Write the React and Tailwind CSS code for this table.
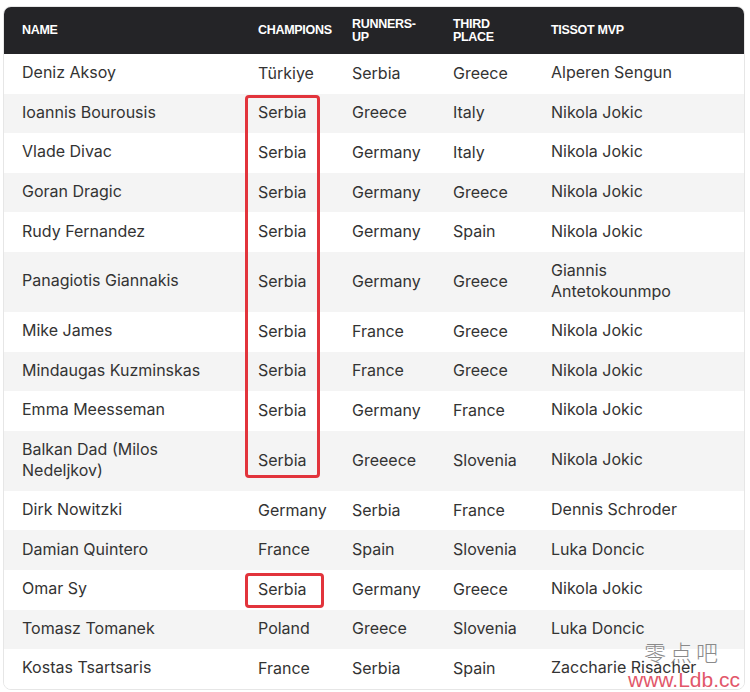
const rows = [
  { name: ["Deniz Aksoy"], champ: "Türkiye", runner: "Serbia", third: "Greece", mvp: ["Alperen Sengun"] },
  { name: ["Ioannis Bourousis"], champ: "Serbia", runner: "Greece", third: "Italy", mvp: ["Nikola Jokic"] },
  { name: ["Vlade Divac"], champ: "Serbia", runner: "Germany", third: "Italy", mvp: ["Nikola Jokic"] },
  { name: ["Goran Dragic"], champ: "Serbia", runner: "Germany", third: "Greece", mvp: ["Nikola Jokic"] },
  { name: ["Rudy Fernandez"], champ: "Serbia", runner: "Germany", third: "Spain", mvp: ["Nikola Jokic"] },
  { name: ["Panagiotis Giannakis"], champ: "Serbia", runner: "Germany", third: "Greece", mvp: ["Giannis", "Antetokounmpo"] },
  { name: ["Mike James"], champ: "Serbia", runner: "France", third: "Greece", mvp: ["Nikola Jokic"] },
  { name: ["Mindaugas Kuzminskas"], champ: "Serbia", runner: "France", third: "Greece", mvp: ["Nikola Jokic"] },
  { name: ["Emma Meesseman"], champ: "Serbia", runner: "Germany", third: "France", mvp: ["Nikola Jokic"] },
  { name: ["Balkan Dad (Milos", "Nedeljkov)"], champ: "Serbia", runner: "Greeece", third: "Slovenia", mvp: ["Nikola Jokic"] },
  { name: ["Dirk Nowitzki"], champ: "Germany", runner: "Serbia", third: "France", mvp: ["Dennis Schroder"] },
  { name: ["Damian Quintero"], champ: "France", runner: "Spain", third: "Slovenia", mvp: ["Luka Doncic"] },
  { name: ["Omar Sy"], champ: "Serbia", runner: "Germany", third: "Greece", mvp: ["Nikola Jokic"] },
  { name: ["Tomasz Tomanek"], champ: "Poland", runner: "Greece", third: "Slovenia", mvp: ["Luka Doncic"] },
  { name: ["Kostas Tsartsaris"], champ: "France", runner: "Serbia", third: "Spain", mvp: ["Zaccharie Risacher"] },
];

const cols = "grid grid-cols-[236px_94px_101px_98px_1fr]";

const Lines = ({ lines }) => (
  <div className="leading-[21px]">
    {lines.map((l, i) => (
      <div key={i} className="whitespace-nowrap">
        {l}
      </div>
    ))}
  </div>
);

export default function App() {
  return (
    <div className="w-[750px] h-[692px] bg-white relative overflow-hidden font-['Inter','Liberation_Sans',sans-serif]">
      <div className="pt-[6px] pl-[3px] pr-[5px]">
        <div className="relative rounded-lg border border-[#e6e6e6] overflow-hidden">
          <div
            className={`${cols} h-[47px] bg-[#242427] text-white font-['Liberation_Sans',sans-serif] font-bold text-[12.5px] leading-[13px] tracking-[-0.3px] items-center`}
          >
            <div className="pl-[18px]">NAME</div>
            <div className="pl-[18px]">CHAMPIONS</div>
            <div className="pl-[18px]">
              RUNNERS-
              <br />
              UP
            </div>
            <div className="pl-[18px]">
              THIRD
              <br />
              PLACE
            </div>
            <div className="pl-[18px]">TISSOT MVP</div>
          </div>
          {rows.map((r, i) => {
            const tall = r.name.length > 1 || r.mvp.length > 1;
            return (
              <div
                key={i}
                className={`${cols} items-center pb-[2px] text-[16px] text-[#333] ${
                  tall ? "h-[60px]" : "h-[39.6px]"
                } ${i % 2 === 1 ? "bg-[#f4f4f4]" : "bg-white"}`}
              >
                <div className="pl-[18px]">
                  <Lines lines={r.name} />
                </div>
                <div className="pl-[18px] whitespace-nowrap">{r.champ}</div>
                <div className="pl-[18px] whitespace-nowrap">{r.runner}</div>
                <div className="pl-[18px] whitespace-nowrap">{r.third}</div>
                <div className="pl-[18px]">
                  <Lines lines={r.mvp} />
                </div>
              </div>
            );
          })}
          <div className="absolute left-[241px] top-[88px] w-[75px] h-[383px] border-[3px] border-[#e2343c] rounded-[4px]" />
          <div className="absolute left-[241px] top-[566px] w-[79px] h-[35px] border-[3px] border-[#e2343c] rounded-[4px]" />
        </div>
      </div>
      <div className="absolute left-[644px] top-[640px] text-[22px] leading-none text-[#8a8a8a] tracking-[4px] font-['Noto_Sans_CJK_SC',serif] font-light">
        零点吧
      </div>
      <div className="absolute left-[628px] top-[669px] text-[21px] leading-none text-[#e2576a] font-['Liberation_Sans',sans-serif]">
        www.Ldb.cc
      </div>
    </div>
  );
}
